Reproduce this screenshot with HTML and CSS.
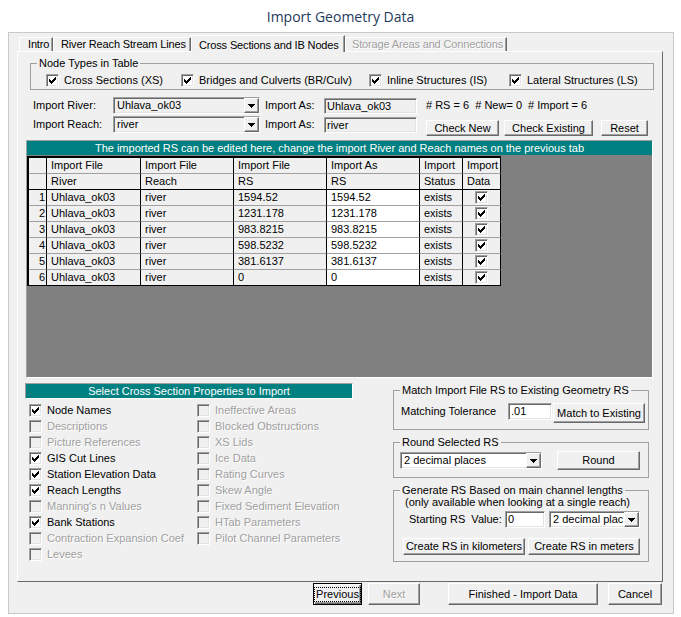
FILE: index.html
```html
<!DOCTYPE html>
<html>
<head>
<meta charset="utf-8">
<title>Import Geometry Data</title>
<link rel="stylesheet" href="styles.css">
</head>
<body>
<svg class="defs" width="0" height="0" aria-hidden="true">
  <defs>
    <symbol id="ck" viewBox="1 1 11 11">
      <polygon shape-rendering="crispEdges" fill="#000" points="3,5 4,5 4,6 5,6 5,7 6,7 6,6 7,6 7,5 8,5 8,4 9,4 9,3 10,3 10,6 9,6 9,7 8,7 8,8 7,8 7,9 6,9 6,10 5,10 5,9 4,9 4,8 3,8"/>
    </symbol>
    <symbol id="dn" viewBox="0 0 7 4">
      <polygon shape-rendering="crispEdges" fill="#000" points="0,0 7,0 4,4 3,4"/>
    </symbol>
  </defs>
</svg>
<div class="window">
  <div class="titlebar">Import Geometry Data</div>
  <div class="client">
    <div class="tabs">
      <div class="tab t1">Intro</div>
      <div class="tab t2">River Reach Stream Lines</div>
      <div class="tab t3 sel">Cross Sections and IB Nodes</div>
      <div class="tab t4 dis">Storage Areas and Connections</div>
    </div>
    <div class="page">
      <fieldset class="grp nodes">
        <legend>Node Types in Table</legend>
        <div class="nodegrid">
          <div class="chk"><span class="cb"><svg><use href="#ck"/></svg></span>Cross Sections (XS)</div>
          <div class="chk"><span class="cb"><svg><use href="#ck"/></svg></span>Bridges and Culverts (BR/Culv)</div>
          <div class="chk"><span class="cb"><svg><use href="#ck"/></svg></span>Inline Structures (IS)</div>
          <div class="chk"><span class="cb"><svg><use href="#ck"/></svg></span>Lateral Structures (LS)</div>
        </div>
      </fieldset>

      <div class="irow r1">
        <span class="lbl l1">Import River:</span>
        <div class="combo grey sunk"><span class="val">Uhlava_ok03</span><span class="arrow"><svg><use href="#dn"/></svg></span></div>
        <span class="lbl l2">Import As:</span>
        <div class="tb grey sunk wide">Uhlava_ok03</div>
        <span class="info">#&nbsp;RS = 6&nbsp;&nbsp;#&nbsp;New= 0&nbsp;&nbsp;#&nbsp;Import = 6</span>
      </div>
      <div class="irow r2">
        <span class="lbl l1">Import Reach:</span>
        <div class="combo grey sunk"><span class="val">river</span><span class="arrow"><svg><use href="#dn"/></svg></span></div>
        <span class="lbl l2">Import As:</span>
        <div class="tb grey sunk wide">river</div>
        <button class="btn b-new">Check New</button>
        <button class="btn b-exist">Check Existing</button>
        <button class="btn b-reset">Reset</button>
      </div>

      <div class="gridwrap">
        <div class="banner">The imported RS can be edited here, change the import River and Reach names on the previous tab</div>
        <div class="gridarea">
          <table class="grid">
            <colgroup>
              <col class="c0"><col class="c1"><col class="c2"><col class="c3"><col class="c4"><col class="c5"><col class="c6">
            </colgroup>
            <tr class="h1"><td class="rh"></td><td>Import File</td><td>Import File</td><td>Import File</td><td>Import As</td><td>Import</td><td>Import</td></tr>
            <tr class="h2"><td class="rh"></td><td>River</td><td>Reach</td><td>RS</td><td>RS</td><td>Status</td><td>Data</td></tr>
            <tr><td class="rh">1</td><td>Uhlava_ok03</td><td>river</td><td>1594.52</td><td class="ed">1594.52</td><td>exists</td><td class="ckc"><span class="cb"><svg><use href="#ck"/></svg></span></td></tr>
            <tr><td class="rh">2</td><td>Uhlava_ok03</td><td>river</td><td>1231.178</td><td class="ed">1231.178</td><td>exists</td><td class="ckc"><span class="cb"><svg><use href="#ck"/></svg></span></td></tr>
            <tr><td class="rh">3</td><td>Uhlava_ok03</td><td>river</td><td>983.8215</td><td class="ed">983.8215</td><td>exists</td><td class="ckc"><span class="cb"><svg><use href="#ck"/></svg></span></td></tr>
            <tr><td class="rh">4</td><td>Uhlava_ok03</td><td>river</td><td>598.5232</td><td class="ed">598.5232</td><td>exists</td><td class="ckc"><span class="cb"><svg><use href="#ck"/></svg></span></td></tr>
            <tr><td class="rh">5</td><td>Uhlava_ok03</td><td>river</td><td>381.6137</td><td class="ed">381.6137</td><td>exists</td><td class="ckc"><span class="cb"><svg><use href="#ck"/></svg></span></td></tr>
            <tr class="last"><td class="rh">6</td><td>Uhlava_ok03</td><td>river</td><td>0</td><td class="ed">0</td><td>exists</td><td class="ckc"><span class="cb"><svg><use href="#ck"/></svg></span></td></tr>
          </table>
        </div>
      </div>

      <div class="lower">
        <div class="props">
          <div class="banner2"><div class="banner2in">Select Cross Section Properties to Import</div></div>
          <div class="lists">
            <div class="col col1">
              <div class="chk row"><span class="cb"><svg><use href="#ck"/></svg></span>Node Names</div>
              <div class="chk row dis"><span class="cb off"></span>Descriptions</div>
              <div class="chk row dis"><span class="cb off"></span>Picture References</div>
              <div class="chk row"><span class="cb"><svg><use href="#ck"/></svg></span>GIS Cut Lines</div>
              <div class="chk row"><span class="cb"><svg><use href="#ck"/></svg></span>Station Elevation Data</div>
              <div class="chk row"><span class="cb"><svg><use href="#ck"/></svg></span>Reach Lengths</div>
              <div class="chk row dis"><span class="cb off"></span>Manning's n Values</div>
              <div class="chk row"><span class="cb"><svg><use href="#ck"/></svg></span>Bank Stations</div>
              <div class="chk row dis"><span class="cb off"></span>Contraction Expansion Coef</div>
              <div class="chk row dis"><span class="cb off"></span>Levees</div>
            </div>
            <div class="col col2">
              <div class="chk row dis"><span class="cb off"></span>Ineffective Areas</div>
              <div class="chk row dis"><span class="cb off"></span>Blocked Obstructions</div>
              <div class="chk row dis"><span class="cb off"></span>XS Lids</div>
              <div class="chk row dis"><span class="cb off"></span>Ice Data</div>
              <div class="chk row dis"><span class="cb off"></span>Rating Curves</div>
              <div class="chk row dis"><span class="cb off"></span>Skew Angle</div>
              <div class="chk row dis"><span class="cb off"></span>Fixed Sediment Elevation</div>
              <div class="chk row dis"><span class="cb off"></span>HTab Parameters</div>
              <div class="chk row dis"><span class="cb off"></span>Pilot Channel Parameters</div>
            </div>
          </div>
        </div>

        <div class="side">
          <fieldset class="grp match">
            <legend>Match Import File RS to Existing Geometry RS</legend>
            <div class="mrow">
              <span class="lbl ml">Matching Tolerance</span>
              <div class="tb sunk tol">.01</div>
              <button class="btn b-match">Match to Existing</button>
            </div>
          </fieldset>
          <fieldset class="grp round">
            <legend>Round Selected RS</legend>
            <div class="rrow">
              <div class="combo sunk rcombo"><span class="val">2 decimal places</span><span class="arrow"><svg><use href="#dn"/></svg></span></div>
              <button class="btn b-round">Round</button>
            </div>
          </fieldset>
          <fieldset class="grp gen">
            <legend>Generate RS Based on main channel lengths</legend>
            <div class="note">(only available when looking at a single reach)</div>
            <div class="grow">
              <span class="lbl sl">Starting RS&nbsp;&nbsp;Value:</span>
              <div class="tb sunk start">0</div>
              <div class="combo sunk gcombo"><span class="val">2 decimal plac</span><span class="arrow"><svg><use href="#dn"/></svg></span></div>
            </div>
            <div class="brow">
              <button class="btn b-km">Create RS in kilometers</button>
              <button class="btn b-m">Create RS in meters</button>
            </div>
          </fieldset>
        </div>
      </div>
    </div>

    <div class="footer">
      <button class="btn fb b-prev focus"><span class="focusbox">Previous</span></button>
      <button class="btn fb b-next dis">Next</button>
      <button class="btn fb b-fin">Finished - Import Data</button>
      <button class="btn fb b-cancel">Cancel</button>
    </div>
  </div>
</div>
</body>
</html>
```

FILE: styles.css
```css
* { box-sizing: border-box; }
html, body { margin: 0; padding: 0; }
body {
  width: 681px;
  height: 617px;
  overflow: hidden;
  background: #ffffff;
  font-family: "Liberation Sans", Arial, sans-serif;
  font-size: 11px;
  color: #000;
}
.defs { position: absolute; width: 0; height: 0; overflow: hidden; }

.window { width: 681px; height: 617px; }

.titlebar {
  height: 32px;
  padding-top: 1px;
  display: flex;
  align-items: center;
  justify-content: center;
  font-family: "Open Sans", "Noto Sans", sans-serif;
  font-size: 14px;
  color: #1f3a5c;
}

.client {
  margin-left: 8px;
  width: 666px;
  height: 582px;
  background: #f0f0f0;
  border: 1px solid #c9c9c9;
}

/* Tabs */
.tabs {
  display: flex;
  align-items: flex-end;
  height: 16px;
  margin: 2px 0 0 10px;
  letter-spacing: -0.15px;
}
.tab {
  height: 14px;
  line-height: 13px;
  padding-left: 7px;
  white-space: nowrap;
  border-top: 1px solid #fff;
  border-left: 1px solid #fff;
  border-right: 1px solid #696969;
  box-shadow: inset -1px 0 0 #a0a0a0;
}
.tab.t1 { width: 34px; padding-left: 8px; }
.tab.t2 { width: 138px; }
.tab.t3 { width: 154px; }
.tab.t4 { width: 162px; padding-left: 6px; }
.tab.sel {
  height: 17px;
  margin-bottom: -1px;
  padding-top: 2px;
  line-height: 14px;
  background: #f0f0f0;
  position: relative;
  z-index: 1;
}
.dis, .tab.dis { color: #a0a0a0; text-shadow: 1px 1px 0 #fff; }

.page {
  margin-left: 8px;
  width: 646px;
  height: 531px;
  border: 1px solid;
  border-color: #fff #696969 #696969 #fff;
}

/* group boxes */
fieldset.grp {
  margin: 0;
  padding: 0;
  min-width: 0;
  border: 1px solid #a0a0a0;
}
fieldset.grp legend {
  margin-left: 6px;
  padding: 0 2px;
  line-height: 14px;
  font-size: 11px;
  white-space: nowrap;
}

.nodes { margin: 4px 0 0 12px !important; width: 624px; }
.nodegrid {
  display: grid;
  grid-template-columns: 135px 188px 140px auto;
  padding: 4px 0 2px 15px;
}

/* checkbox */
.chk {
  display: flex;
  align-items: center;
  gap: 5px;
  height: 13px;
  line-height: 13px;
  white-space: nowrap;
}
.cb {
  display: block;
  flex: none;
  width: 13px;
  height: 13px;
  border: 1px solid;
  border-color: #a0a0a0 #fff #fff #a0a0a0;
  box-shadow: inset 1px 1px 0 #696969, inset -1px -1px 0 #e3e3e3;
  background: #fff;
}
.cb svg { display: block; width: 11px; height: 11px; }
.cb.off { background: #f0f0f0; }
.chk.dis .cb { background: #f0f0f0; }

/* sunken controls */
.sunk {
  border: 1px solid;
  border-color: #a0a0a0 #fff #fff #a0a0a0;
  box-shadow: inset 1px 1px 0 #696969, inset -1px -1px 0 #e3e3e3;
}
.tb {
  height: 17px;
  padding-left: 2px;
  line-height: 15px;
  background: #fff;
  white-space: nowrap;
  overflow: hidden;
}
.grey { background: #f0f0f0; }
.combo {
  display: flex;
  height: 17px;
  background: #fff;
}
.combo.grey { background: #f0f0f0; }
.combo .val {
  flex: 1;
  padding-left: 3px;
  line-height: 15px;
  white-space: nowrap;
  overflow: hidden;
}
.arrow {
  width: 15px;
  height: 15px;
  display: flex;
  align-items: center;
  justify-content: center;
  background: #f0f0f0;
  border: 1px solid;
  border-color: #fff #696969 #696969 #fff;
  box-shadow: inset -1px -1px 0 #a0a0a0;
}
.arrow svg { width: 7px; height: 4px; display: block; }

/* buttons */
.btn {
  margin: 0;
  padding: 0;
  font-family: inherit;
  font-size: 11px;
  color: #000;
  background: #f0f0f0;
  border: 1px solid;
  border-color: #fff #696969 #696969 #fff;
  box-shadow: inset -1px -1px 0 #a0a0a0;
  text-align: center;
  white-space: nowrap;
  line-height: 13px;
}
.btn.dis { color: #a0a0a0; text-shadow: 1px 1px 0 #fff; }

/* import rows */
.irow {
  display: flex;
  align-items: flex-start;
  padding-left: 15px;
}
.irow.r1 { margin-top: 7px; height: 17px; }
.irow.r2 { margin-top: 2px; height: 20px; }
.lbl { line-height: 17px; white-space: nowrap; }
.l1 { width: 80px; }
.irow .combo { width: 147px; }
.l2 { width: 59px; margin-left: 5px; }
.tb.wide { width: 93px; margin-top: 1px; height: 16px; line-height: 14px; }
.info { margin-left: 9px; line-height: 17px; white-space: nowrap; }
.b-new { width: 73px; height: 16px; margin: 4px 0 0 9px; }
.b-exist { width: 89px; height: 16px; margin: 4px 0 0 5px; }
.b-reset { width: 47px; height: 16px; margin: 4px 0 0 8px; }

/* grid */
.gridwrap {
  margin: 4px 0 0 8px;
  width: 627px;
  border: 1px solid;
  border-color: #a0a0a0 #fff #fff #a0a0a0;
}
.banner {
  height: 14px;
  line-height: 14px;
  background: #008080;
  color: #fff;
  text-align: center;
  white-space: nowrap;
}
.gridarea {
  height: 222px;
  background: #808080;
  padding-top: 1px;
}
table.grid {
  border-collapse: separate;
  border-spacing: 0;
  table-layout: fixed;
  width: 474px;
  border-left: 2px solid #000;
  border-top: 2px solid #000;
  background: #f0f0f0;
}
col.c0 { width: 18px; }
col.c1 { width: 94px; }
col.c2 { width: 93px; }
col.c3 { width: 93px; }
col.c4 { width: 93px; }
col.c5 { width: 43px; }
col.c6 { width: 38px; }
table.grid td {
  height: 16px;
  padding: 0 0 0 4px;
  line-height: 15px;
  border-right: 1px solid #000;
  border-bottom: 1px solid #a0a0a0;
  white-space: nowrap;
  overflow: hidden;
  vertical-align: middle;
}
table.grid tr.h2 td { border-bottom-color: #000; }
table.grid tr.last td { border-bottom-color: #000; }
table.grid td.rh { text-align: right; padding: 0 1px 0 0; }
table.grid td.ed { background: #fff; }
table.grid td.ckc { padding: 0; }
table.grid td.ckc .cb { margin: 0 auto; }

/* lower area */
.lower {
  display: flex;
  margin-top: 5px;
}
.props { margin-left: 7px; width: 368px; }
.banner2 {
  width: 328px;
  height: 16px;
  border: 1px solid;
  border-color: #a0a0a0 #fff #fff #a0a0a0;
}
.banner2in {
  height: 14px;
  line-height: 14px;
  background: #008080;
  color: #fff;
  text-align: center;
  white-space: nowrap;
}
.lists { display: flex; margin-top: 3px; }
.col1 { width: 172px; padding-left: 4px; }
.chk.row { height: 16px; line-height: 16px; }

.side { width: 256px; }
.match { width: 256px; }
.mrow {
  display: flex;
  align-items: flex-start;
  padding: 6px 0 6px 7px;
}
.ml { width: 107px; }
.tol { width: 44px; }
.b-match { width: 92px; height: 20px; margin-left: 1px; }

.round { width: 256px; margin-top: 5px !important; }
.rrow {
  display: flex;
  align-items: flex-start;
  padding: 2px 0 7px 6px;
}
.rcombo { width: 142px; margin-top: 1px; }
.b-round { width: 83px; height: 19px; margin-left: 15px; }

.gen { width: 256px; margin-top: 5px !important; }
.note {
  margin-top: -1px;
  padding-left: 11px;
  line-height: 12px;
  white-space: nowrap;
}
.grow {
  display: flex;
  align-items: flex-start;
  margin-top: 3px;
  padding-left: 15px;
}
.sl { width: 96px; }
.start { width: 40px; }
.gcombo { width: 91px; margin-left: 4px; }
.brow {
  display: flex;
  margin-top: 10px;
  padding: 0 0 6px 9px;
}
.b-km { width: 122px; height: 17px; }
.b-m { width: 112px; height: 17px; margin-left: 3px; }

/* footer */
.footer {
  display: flex;
  margin-top: 1px;
  padding-left: 304px;
}
.fb { height: 22px; }
.b-prev { width: 49px; }
.b-next { width: 52px; margin-left: 6px; }
.b-fin { width: 150px; margin-left: 28px; }
.b-cancel { width: 54px; margin-left: 10px; }
.btn.focus {
  border-color: #000;
  box-shadow: inset 1px 1px 0 #fff, inset -1px -1px 0 #696969, inset -2px -2px 0 #a0a0a0;
}
.focusbox {
  display: inline-block;
  border: 1px dotted #000;
  padding: 0 1px;
  line-height: 13px;
}
```
